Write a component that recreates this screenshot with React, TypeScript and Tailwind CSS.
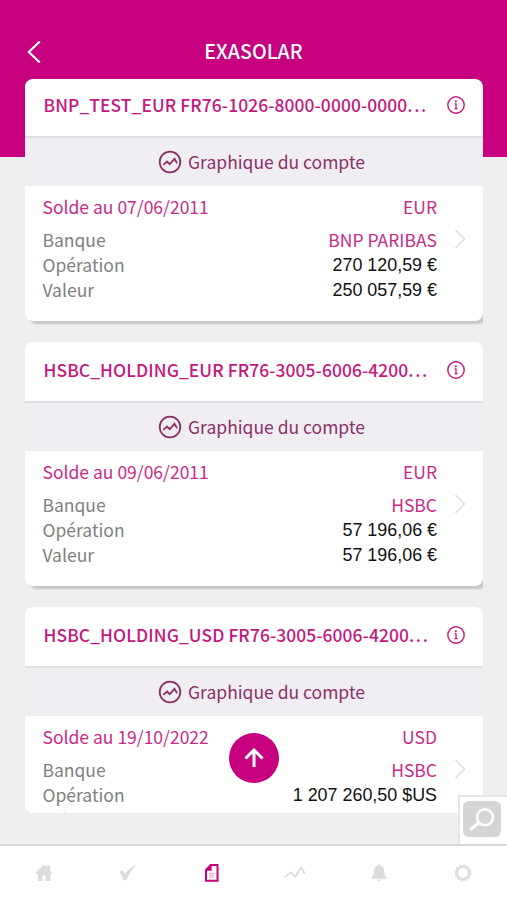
import React from 'react';

const accounts = [
  {
    name: 'BNP_TEST_EUR FR76-1026-8000-0000-0000',
    date: '07/06/2011',
    currency: 'EUR',
    bank: 'BNP PARIBAS',
    operation: '270 120,59 €',
    value: '250 057,59 €',
  },
  {
    name: 'HSBC_HOLDING_EUR FR76-3005-6006-4200',
    date: '09/06/2011',
    currency: 'EUR',
    bank: 'HSBC',
    operation: '57 196,06 €',
    value: '57 196,06 €',
  },
  {
    name: 'HSBC_HOLDING_USD FR76-3005-6006-4200',
    date: '19/10/2022',
    currency: 'USD',
    bank: 'HSBC',
    operation: '1 207 260,50 $US',
    value: '1 207 260,50 $US',
  },
];

const InfoIcon = () => (
  <svg className="mb-[3px]" width="20" height="20" viewBox="0 0 20 20" fill="none" stroke="#c4177f">
    <circle cx="10" cy="10" r="8.2" strokeWidth="1.4" />
    <path d="M8.6 8.8H10v4.8M8.5 13.6h3.2" strokeWidth="1.3" />
    <circle cx="9.8" cy="6.3" r="1.1" fill="#c4177f" stroke="none" />
  </svg>
);

const GraphIcon = () => (
  <svg width="24" height="24" viewBox="0 0 24 24" fill="none" stroke="#8c3068">
    <circle cx="12" cy="12" r="10.3" strokeWidth="1.8" />
    <path d="M5.3 14.8l3.7-3.3 2.7 2.7 4.8-5.4 2.6 4.4" strokeWidth="1.8" />
  </svg>
);

const AccountCard = ({ account }) => (
  <div className="mb-[21px]">
    <div className="h-[61px] bg-white rounded-t-lg border-b-2 border-[#dfdfe0] flex items-center pl-[18.5px] pr-[17px]">
      <h2 className="flex-1 whitespace-nowrap text-[17.4px] tracking-[0.1px] font-medium text-[#c4177f] leading-6 pb-[3px]">
        {account.name}<span className="tracking-[1.7px]">...</span>
      </h2>
      <InfoIcon />
    </div>
    <div className="h-12 bg-[#f0eef2] flex items-center justify-center gap-1.5 pl-[15px] text-[17.5px] leading-6 text-[#8c3068]">
      <GraphIcon />
      <span>Graphique du compte</span>
    </div>
    <div className="h-[135px] bg-white rounded-b-lg shadow-[4px_3px_2px_#c6c6c6] relative pl-[17.5px] pr-[46px] pt-2 text-[17.5px] leading-[25px]">
      <div className="flex justify-between mb-2 text-[#c92a8a]">
        <span>Solde au {account.date}</span>
        <span>{account.currency}</span>
      </div>
      <div className="flex justify-between text-[#808080]">
        <span>Banque</span>
        <span className="text-[#c92a8a]">{account.bank}</span>
      </div>
      <div className="flex justify-between text-[#808080]">
        <span>Opération</span>
        <span className="font-['Liberation_Sans',sans-serif] text-[17.9px] text-[#111] pt-px">{account.operation}</span>
      </div>
      <div className="flex justify-between text-[#808080] -mt-px">
        <span>Valeur</span>
        <span className="font-['Liberation_Sans',sans-serif] text-[17.9px] text-[#111] pt-px">{account.value}</span>
      </div>
      <svg className="absolute right-[17px] top-[43px]" width="12" height="20" viewBox="0 0 12 20" fill="none" stroke="#d9d9d9" strokeWidth="1.2">
        <path d="M1.5 1l9 9-9 9" />
      </svg>
    </div>
  </div>
);

const TabBar = () => (
  <nav className="h-14 bg-white border-t-2 border-[#d9d9d9] grid grid-cols-6 items-center justify-items-center px-0.5 text-[#dcdcdc]">
    <svg width="20" height="20" viewBox="0 0 20 20" fill="currentColor">
      <path d="M10 1.5l3.2 3V2.2h3v5.2L18.5 10l-1.2 1h-.8v7h-4.8v-5.4H8.5V18H3.8v-7H2.5l-1.2-1z" />
    </svg>
    <svg width="20" height="20" viewBox="0 0 20 20" fill="currentColor">
      <path d="M1 8.8l3.8-1.6 2 4C9.8 7 13.5 3.5 19 1.5 14 6 11 11 8.2 17.2H5.3C4.5 13.5 3 11 1 8.8z" />
    </svg>
    <svg width="20" height="20" viewBox="0 0 20 20">
      <path d="M8.8 2h6.700v15.800H4V7z" fill="white" stroke="#c6007e" strokeWidth="2" />
      <path d="M3 7.800L9.600 1v6.800z" fill="#c6007e" />
      <path d="M7 10.500h5.500M7 12.300h5.500M7 14.100h4.500" stroke="#eaa0cd" strokeWidth="1" />
    </svg>
    <svg width="22" height="20" viewBox="0 0 22 20" fill="none" stroke="currentColor" strokeWidth="1.8">
      <path d="M.8 14l6.200-4.600 4.200 4.400 6-9.300 3.600 6" />
    </svg>
    <svg width="20" height="20" viewBox="0 0 20 20" fill="currentColor">
      <path d="M10 1.500c.8 0 1.300.5 1.300 1.200 2.700.7 4 2.600 4 5.300 0 3.300.5 4.800 2 6.200v1.500H2.700v-1.500C4.200 12.800 4.700 11.300 4.700 8c0-2.700 1.300-4.600 4-5.300 0-.7.5-1.200 1.300-1.200z" />
      <path d="M8 16.500h4c-.3 1.200-1 1.700-2 1.700s-1.700-.5-2-1.700z" />
    </svg>
    <svg width="20" height="20" viewBox="0 0 20 20" fill="none" stroke="currentColor">
      <circle cx="10" cy="10" r="6.2" strokeWidth="2.6" />
      <circle cx="10" cy="10" r="7.7" strokeWidth="1.6" strokeDasharray="2.4 1.63" />
    </svg>
  </nav>
);

const App = () => {
  return (
    <div className="relative w-full h-[900px] overflow-hidden flex flex-col bg-[linear-gradient(#c6007e_157px,#efeff0_157px)] font-['Noto_Sans_CJK_SC',sans-serif]">
      <header className="h-[79px] shrink-0 flex items-center px-[27px] pt-[25px]">
        <svg width="14" height="24" viewBox="0 0 14 24" fill="none" stroke="white" strokeWidth="2.2">
          <path d="M12.8 1.5L1.8 12l11 10.500" />
        </svg>
        <h1 className="flex-1 text-center text-[19.6px] leading-6 font-medium text-white pr-[14px] pb-0.5">EXASOLAR</h1>
      </header>
      <main className="h-[734px] shrink-0 ml-[25px] mr-6 overflow-hidden rounded-lg">
        <div className="-mt-0.5">
          {accounts.map((account) => (
            <AccountCard key={account.name} account={account} />
          ))}
        </div>
      </main>
      <div className="h-[31px] shrink-0" />
      <TabBar />
      <button className="absolute left-[229px] top-[733px] w-[50px] h-[50px] rounded-full bg-[#c6007e] flex items-center justify-center">
        <svg width="20" height="20" viewBox="0 0 20 20" fill="none" stroke="white" strokeWidth="3">
          <path d="M10 19V2M1.500 10.500L10 2l8.500 8.500" />
        </svg>
      </button>
      <button className="absolute right-0 top-[795px] w-[49px] h-[49px] bg-white border-l-2 border-t-2 border-[#e6e6e6] pl-[3px] pt-1 flex items-start">
        <span className="w-[38px] h-9 rounded-md bg-[#d5d5d3]">
          <svg width="38" height="36" viewBox="0 0 38 36" fill="none" stroke="white">
            <circle cx="22" cy="16.3" r="8" strokeWidth="2.6" />
            <path d="M16 21.800l-9 7" strokeWidth="3.2" />
          </svg>
        </span>
      </button>
    </div>
  );
};

export default App;
